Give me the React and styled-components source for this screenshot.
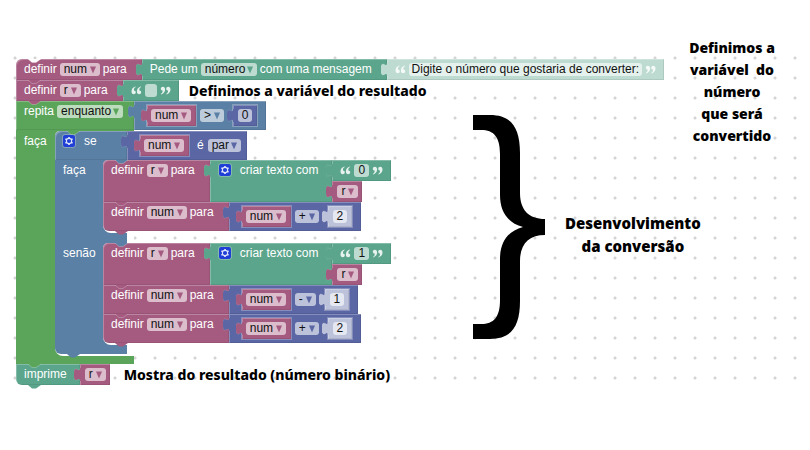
import React from "react";
import styled, { createGlobalStyle } from "styled-components";

const pink = "#a55b80";
const teal = "#5ba58c";
const green = "#5ba55b";
const blue = "#5b80a5";
const indigo = "#5b67a5";
const paleTeal = "#bddbd1";
const paleIndigo = "#bdc2db";

const GlobalStyle = createGlobalStyle`
  body {
    margin: 0;
    background: #fff;
    font-family: "Liberation Sans", Arial, sans-serif;
    font-size: 12px;
    line-height: 13px;
  }
  *, *::before, *::after { box-sizing: border-box; }
`;

const Board = styled.main`
  display: flex;
  align-items: flex-start;
  margin-top: 49px;
  padding: 10px 24px 4px 16px;
  background-image: radial-gradient(circle, #cfcfcf 0, #d6d6d6 1px, transparent 2px);
  background-size: 20px 20px;
  background-position: 5px -1px;
`;

const Workspace = styled.div`
  flex: 1;
  min-width: 0;
`;

const Line = styled.div`
  display: flex;
  align-items: flex-start;
`;

const Content = styled.div`
  display: flex;
  align-items: flex-start;
`;

const Program = styled.div`
  width: 457px;
  flex: none;
`;

const Annotation = styled.p`
  margin: 0;
  color: #000;
  font-family: "Noto Sans", "Open Sans", sans-serif;
  font-weight: ${(p) => p.$weight ?? 900};
  font-size: ${(p) => p.$size}px;
  line-height: ${(p) => p.$line}px;
  text-align: center;
  white-space: pre-line;
`;

const InlineNote = styled(Annotation)`
  margin-left: ${(p) => p.$gap}px;
  white-space: nowrap;
`;

const SideNote = styled(Annotation)`
  width: 108px;
  flex: none;
  margin-top: -22px;
  white-space: pre-wrap;
`;

const BraceArt = styled.svg`
  flex: none;
  display: block;
  margin-top: 35px;
`;

const DevelopmentNote = styled(Annotation)`
  margin: 132px 0 0 20px;
  white-space: pre;
`;

/* A puzzle piece: one coloured slab with its labels and fields. */
const Block = styled.div`
  position: relative;
  display: flex;
  align-items: flex-start;
  align-self: ${(p) => (p.$tall ? "stretch" : "flex-start")};
  gap: 3px;
  flex: none;
  min-height: 21px;
  padding: 4px ${(p) => p.$end ?? 15}px 4px ${(p) => p.$start ?? 8}px;
  background: ${(p) => p.$color};
  color: #fff;
  border-radius: ${(p) => p.$corners ?? "0"};
  box-shadow: inset 1px 1px 0 rgba(255, 255, 255, 0.25), inset -1px -1px 0 rgba(0, 0, 0, 0.08);
  white-space: nowrap;
`;

const InlineBlock = styled(Block)`
  margin-left: ${(p) => p.$gap ?? 0}px;
  outline: 1px solid rgba(255, 255, 255, 0.25);
`;

const ValueStack = styled.div`
  display: flex;
  flex-direction: column;
  align-items: flex-start;
`;

const Operand = styled.div`
  display: flex;
  align-items: flex-start;
  gap: 4px;
  padding-top: 4px;
  margin-left: ${(p) => p.$gap ?? 1}px;
`;

const BlockBody = styled.div`
  display: flex;
`;

const Arm = styled.div`
  width: ${(p) => p.$width}px;
  flex: none;
  padding: 4px 0 0 8px;
  color: #fff;
  background: ${(p) => p.$color};
`;

const Mouth = styled.div`
  background: linear-gradient(${(p) => p.$color}, ${(p) => p.$color}) no-repeat 0 0 / ${(p) => p.$lip}px 100%;
  padding-bottom: ${(p) => p.$foot}px;
  position: relative;
`;

const MouthSpace = styled.div`
  position: relative;
  padding-bottom: 2px;
  border-radius: 5px 0 0 8px;
  background: linear-gradient(#fff, #fff) no-repeat 0 0 / ${(p) => p.$lip}px 100%;
`;

const TabSvg = styled.svg`
  position: absolute;
  left: -6px;
  top: 4px;
  display: block;
`;

const BumpSvg = styled.svg`
  position: absolute;
  left: 12px;
  top: ${(p) => (p.$below ? "100%" : "0")};
  z-index: 2;
  display: block;
`;

const SelectShell = styled.label`
  position: relative;
  display: block;
  width: ${(p) => p.$width}px;
  height: 13px;
  flex: none;
`;

const SelectBox = styled.select`
  appearance: none;
  display: block;
  width: 100%;
  height: 13px;
  margin: 0;
  padding: 0 0 0 4px;
  border: 0;
  border-radius: 3px;
  background: rgba(255, 255, 255, 0.6);
  color: #111;
  font: inherit;
  line-height: 13px;
`;

const ArrowSvg = styled.svg`
  position: absolute;
  right: 4px;
  top: 3px;
  pointer-events: none;
`;

const TextBox = styled.input`
  display: block;
  flex: none;
  width: ${(p) => p.$width}px;
  height: 13px;
  margin: 0;
  padding: 0;
  border: 0;
  border-radius: 3px;
  background: rgba(255, 255, 255, 0.6);
  color: #111;
  font: inherit;
  line-height: 13px;
  text-align: center;
`;

const GearButton = styled.button`
  display: block;
  width: 12px;
  height: 12px;
  margin: 0 6px 0 0;
  padding: 0;
  border: 0;
  border-radius: 2px;
  background: #1f3fd6;
  outline: 1px solid rgba(255, 255, 255, 0.25);
`;

const QuoteSvg = styled.svg`
  display: block;
  flex: none;
  margin-top: 2px;
`;

const Tab = ({ color }) => (
  <TabSvg width="7" height="13" viewBox="0 0 8 15" aria-hidden="true">
    <path d="M8 0H7C7 8 0-6 0 7.5S7 7 7 15H8Z" fill={color} stroke="rgba(255,255,255,.25)" strokeWidth="1" />
    <path d="M8 0H7C7 8 0-6 0 7.5S7 7 7 15H8Z" fill={color} />
  </TabSvg>
);

const Bump = ({ color, below }) => (
  <BumpSvg $below={below} width="13" height="4" viewBox="0 0 13 4" aria-hidden="true">
    <path d="M0 0 4 3.5H8L13 0Z" fill={color} />
    {!below && <path d="M0 0 4 3.5H8L13 0" fill="none" stroke="rgba(255,255,255,.3)" strokeWidth=".8" />}
  </BumpSvg>
);

const Dropdown = ({ value, width, color, name }) => (
  <SelectShell $width={width}>
    <SelectBox aria-label={name} defaultValue={value}>
      <option>{value}</option>
    </SelectBox>
    <ArrowSvg width="6" height="8" viewBox="0 0 6 8" aria-hidden="true">
      <path d="M0 .5H6L3 7.5Z" fill={color} />
    </ArrowSvg>
  </SelectShell>
);

const Quote = ({ closing }) => (
  <QuoteSvg width="11" height="9" viewBox="0 0 10 9" aria-hidden="true">
    <g fill="#fff" fillOpacity=".85" transform={closing ? "rotate(180 5 4.5)" : undefined}>
      <path d="M4 .6C1.5 1.3 0 3.2 0 5.5 0 7.200 .9 8.200 2.200 8.200 3.400 8.200 4.300 7.400 4.300 6.200 4.300 5.100 3.500 4.400 2.500 4.400 2.300 2.800 2.900 1.700 4.300 1Z" />
      <path d="M9.400 .6C6.900 1.300 5.400 3.200 5.400 5.500 5.400 7.200 6.300 8.200 7.600 8.200 8.800 8.200 9.700 7.400 9.700 6.200 9.700 5.100 8.900 4.400 7.900 4.400 7.700 2.800 8.300 1.700 9.700 1Z" />
    </g>
  </QuoteSvg>
);

const Gear = () => (
  <GearButton type="button" aria-label="Opções">
    <svg width="12" height="12" viewBox="0 0 12 12" display="block">
      <g stroke="#dfe5fb" strokeWidth="1.6">
        <path d="M6 1.900V10.100M2.400 3.900 9.600 8.100M9.600 3.900 2.400 8.100" />
      </g>
      <circle cx="6" cy="6" r="3.200" fill="#dfe5fb" />
      <circle cx="6" cy="6" r="2.100" fill="#1f3fd6" />
    </svg>
  </GearButton>
);

const VariableBlock = ({ name }) => (
  <Block $color={pink} $start={5} $end={4}>
    <Tab color={pink} />
    <Dropdown name="Variável" value={name} width={name === "r" ? 21 : 40} color={pink} />
  </Block>
);

const InlineVariable = () => (
  <InlineBlock $color={pink} $start={4} $end={5}>
    <Tab color={pink} />
    <Dropdown name="Variável" value="num" width={40} color={pink} />
  </InlineBlock>
);

const NumberBlock = ({ value, pale }) => (
  <InlineBlock $color={pale ? paleIndigo : indigo} $start={5} $end={5} $gap={6}>
    <Tab color={pale ? paleIndigo : indigo} />
    <TextBox aria-label="Valor" $width={14} defaultValue={value} />
  </InlineBlock>
);

const TextBlock = ({ value, width, pale }) => (
  <Block $color={pale ? paleTeal : teal} $end={8}>
    <Tab color={pale ? paleTeal : teal} />
    <Quote />
    <TextBox aria-label="Texto" $width={width} defaultValue={value} />
    <Quote closing />
  </Block>
);

const SetVariable = ({ name, above, corners, last, children }) => (
  <Line>
    <Block $color={pink} $corners={corners} $tall>
      <Bump color={above} />
      <span>definir</span>
      <Dropdown name="Variável" value={name} width={name === "r" ? 21 : 40} color={pink} />
      <span>para</span>
      {last && <Bump color={pink} below />}
    </Block>
    {children}
  </Line>
);

const Arithmetic = ({ operator, value }) => (
  <Block $color={indigo} $start={13} $end={9}>
    <Tab color={indigo} />
    <InlineVariable />
    <Operand>
      <Dropdown name="Operador" value={operator} width={operator === "-" ? 21 : 24} color={indigo} />
    </Operand>
    <NumberBlock value={value} pale />
  </Block>
);

const JoinText = ({ digit }) => (
  <>
    <Block $color={teal} $start={9} $end={14} $tall>
      <Tab color={teal} />
      <Gear />
      <span>criar texto com</span>
    </Block>
    <ValueStack>
      <TextBlock value={digit} width={15} />
      <VariableBlock name="r" />
    </ValueStack>
  </>
);

const LoopHead = styled(Block)`
  width: 118px;
  padding-right: 0;
`;

const ConditionHead = styled(Block)`
  width: 72px;
  padding-right: 0;
`;

const HeadLine = styled(Line)`
  padding-bottom: ${(p) => p.$rest ?? 0}px;
  background: linear-gradient(${(p) => p.$color}, ${(p) => p.$color}) no-repeat 0 0 / ${(p) => p.$width}px 100%;
  border-top-left-radius: ${(p) => p.$round ?? 0}px;
`;

const Branch = ({ label, foot, children }) => (
  <BlockBody>
    <Arm $color={blue} $width={48}>{label}</Arm>
    <Mouth $color={blue} $lip={24} $foot={foot}>
      <MouthSpace $lip={24}>{children}</MouthSpace>
    </Mouth>
  </BlockBody>
);

const ConditionShell = styled.div`
  position: relative;
  & > ${BlockBody}:last-of-type > ${Arm} {
    border-bottom-left-radius: 6px;
  }
`;

const Condition = () => (
  <ConditionShell>
    <HeadLine $color={blue} $width={72} $round={6}>
      <ConditionHead $color={blue} $corners="6px 0 0 0" $tall>
        <Bump color={green} />
        <Gear />
        <span>se</span>
      </ConditionHead>
      <Block $color={indigo} $start={13} $end={6}>
        <Tab color={indigo} />
        <InlineVariable />
        <Operand $gap={5}>
          <span>é</span>
          <Dropdown name="Propriedade" value="par" width={33} color={indigo} />
        </Operand>
      </Block>
    </HeadLine>
    <Branch label="faça" foot={10}>
      <SetVariable name="r" above={blue} corners="5px 0 0 0">
        <JoinText digit="0" />
      </SetVariable>
      <SetVariable name="num" above={pink} corners="0 0 0 6px" last>
        <Arithmetic operator="+" value="2" />
      </SetVariable>
    </Branch>
    <Branch label="senão" foot={9}>
      <SetVariable name="r" above={blue} corners="5px 0 0 0">
        <JoinText digit="1" />
      </SetVariable>
      <SetVariable name="num" above={pink}>
        <Arithmetic operator="-" value="1" />
      </SetVariable>
      <SetVariable name="num" above={pink} corners="0 0 0 6px" last>
        <Arithmetic operator="+" value="2" />
      </SetVariable>
    </Branch>
    <Bump color={blue} below />
  </ConditionShell>
);

const Loop = () => (
  <>
    <HeadLine $color={green} $width={118} $rest={1}>
      <LoopHead $color={green} $tall>
        <Bump color={pink} />
        <span>repita</span>
        <Dropdown name="Tipo de repetição" value="enquanto" width={66} color={green} />
      </LoopHead>
      <Block $color={blue} $start={13} $end={9}>
        <Tab color={blue} />
        <InlineVariable />
        <Operand>
          <Dropdown name="Comparação" value=">" width={24} color={blue} />
        </Operand>
        <NumberBlock value="0" />
      </Block>
    </HeadLine>
    <BlockBody>
      <Arm $color={green} $width={39}>faça</Arm>
      <Mouth $color={green} $lip={79} $foot={8}>
        <MouthSpace $lip={79}>
          <Condition />
        </MouthSpace>
      </Mouth>
    </BlockBody>
  </>
);

const Brace = () => (
  <BraceArt width="72" height="224" viewBox="0 0 72 224" aria-hidden="true">
    <path
      d="M0 0H17C38 0 47 12 47 38V78C47 95 56 104 72 104V120C56 120 47 129 47 146V186C47 212 38 224 17 224H0V209H8C21 209 27 202 27 185V144C27 127 35 116 50 112C35 108 27 97 27 80V39C27 22 21 15 8 15H0Z"
      fill="#000"
    />
  </BraceArt>
);

export default function App() {
  return (
    <>
      <GlobalStyle />
      <Board>
        <Workspace>
          <SetVariable name="num" above="#fff" corners="6px 0 0 0">
            <Block $color={teal}>
              <Tab color={teal} />
              <span>Pede um</span>
              <Dropdown name="Tipo de entrada" value="número" width={56} color={teal} />
              <span>com uma mensagem</span>
            </Block>
            <TextBlock value="Digite o número que gostaria de converter:" width={233} pale />
          </SetVariable>
          <Content>
            <Program>
              <SetVariable name="r" above={pink}>
                <TextBlock value="" width={12} />
                <InlineNote $size={14} $weight={800} $line={21} $gap={10}>Definimos a variável do resultado</InlineNote>
              </SetVariable>
              <Loop />
              <Line>
                <Block $color={teal} $end={13} $corners="0 0 0 6px">
                  <Bump color={green} />
                  <span>imprime</span>
                  <Bump color={teal} below />
                </Block>
                <VariableBlock name="r" />
                <InlineNote $size={14} $weight={800} $line={21} $gap={14}>Mostra do resultado (número binário)</InlineNote>
              </Line>
            </Program>
            <Brace />
            <DevelopmentNote $size={15} $line={23}>{"Desenvolvimento\nda conversão"}</DevelopmentNote>
          </Content>
        </Workspace>
        <SideNote $size={14} $line={22}>{"Definimos a\nvariável  do\nnúmero\nque será\nconvertido"}</SideNote>
      </Board>
    </>
  );
}
